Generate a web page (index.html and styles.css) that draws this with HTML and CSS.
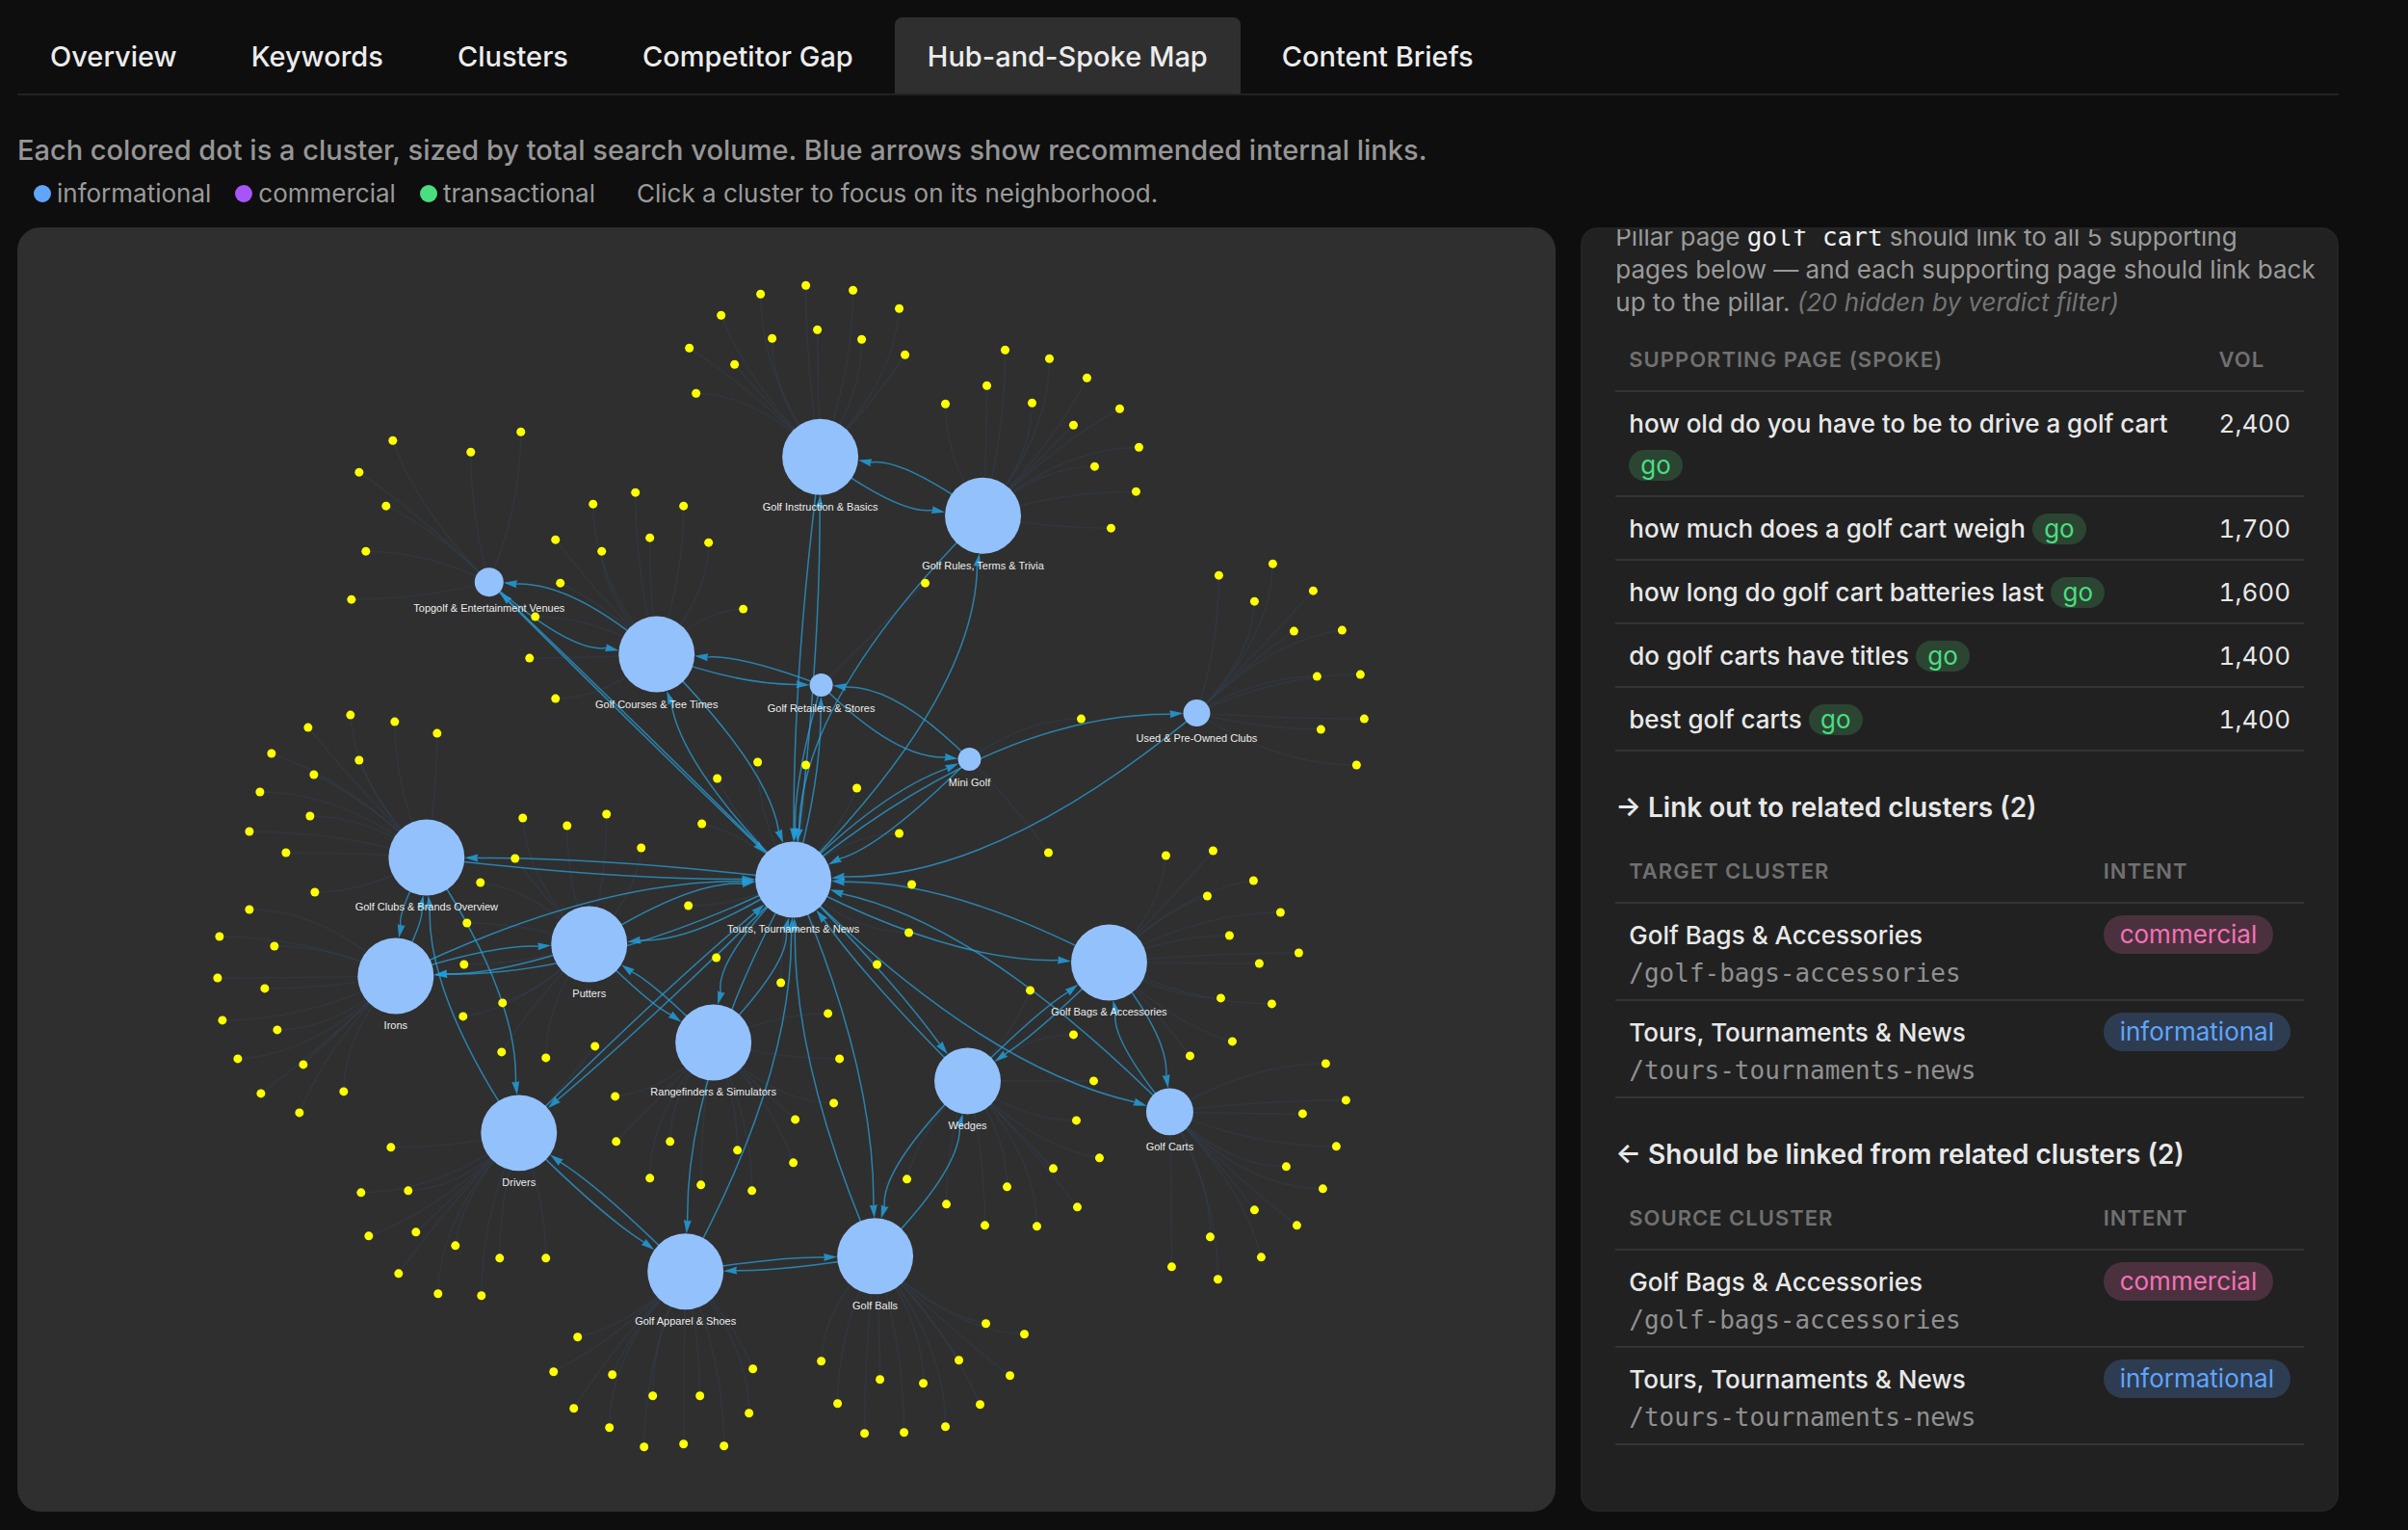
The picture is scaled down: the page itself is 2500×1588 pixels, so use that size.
FILE: index.html
```html
<!DOCTYPE html>
<html lang="en">
<head>
    <meta charset="UTF-8">
    <meta name="viewport" content="width=device-width, initial-scale=1.0">
    <title>Hub-and-Spoke Map</title>
    <link rel="stylesheet" href="styles.css">
</head>
<body>
    <nav class="tabs">
        <button class="tab">Overview</button>
        <button class="tab">Keywords</button>
        <button class="tab">Clusters</button>
        <button class="tab">Competitor Gap</button>
        <button class="tab active">Hub-and-Spoke Map</button>
        <button class="tab">Content Briefs</button>
    </nav>

    <p class="intro">Each colored dot is a cluster, sized by total search volume. Blue arrows show recommended internal links.</p>
    <div class="legend">
        <span class="legend-item"><i class="dot dot-info"></i>informational</span>
        <span class="legend-item"><i class="dot dot-comm"></i>commercial</span>
        <span class="legend-item"><i class="dot dot-trans"></i>transactional</span>
        <span class="legend-hint">Click a cluster to focus on its neighborhood.</span>
    </div>

    <main class="layout">
        <section class="map">
            <svg id="graph" viewBox="17 236 1598 1333" role="img" aria-label="Cluster map"></svg>
        </section>

        <aside class="details">
            <p class="pillar">Pillar page <code>golf cart</code> should link to all 5 supporting pages below — and each supporting page should link back up to the pillar. <em>(20 hidden by verdict filter)</em></p>
            <table class="pages">
                <thead>
                    <tr><th>Supporting page (spoke)</th><th class="vol">Vol</th></tr>
                </thead>
                <tbody>
                    <tr><td><b>how old do you have to be to drive a golf cart</b> <span class="go">go</span></td><td class="vol">2,400</td></tr>
                    <tr><td><b>how much does a golf cart weigh</b> <span class="go">go</span></td><td class="vol">1,700</td></tr>
                    <tr><td><b>how long do golf cart batteries last</b> <span class="go">go</span></td><td class="vol">1,600</td></tr>
                    <tr><td><b>do golf carts have titles</b> <span class="go">go</span></td><td class="vol">1,400</td></tr>
                    <tr><td><b>best golf carts</b> <span class="go">go</span></td><td class="vol">1,400</td></tr>
                </tbody>
            </table>

            <h3>→ Link out to related clusters (2)</h3>
            <table class="links">
                <thead>
                    <tr><th>Target cluster</th><th class="intent">Intent</th></tr>
                </thead>
                <tbody>
                    <tr><td><b>Golf Bags &amp; Accessories</b><code>/golf-bags-accessories</code></td><td class="intent"><span class="pill commercial">commercial</span></td></tr>
                    <tr><td><b>Tours, Tournaments &amp; News</b><code>/tours-tournaments-news</code></td><td class="intent"><span class="pill informational">informational</span></td></tr>
                </tbody>
            </table>

            <h3>← Should be linked from related clusters (2)</h3>
            <table class="links">
                <thead>
                    <tr><th>Source cluster</th><th class="intent">Intent</th></tr>
                </thead>
                <tbody>
                    <tr><td><b>Golf Bags &amp; Accessories</b><code>/golf-bags-accessories</code></td><td class="intent"><span class="pill commercial">commercial</span></td></tr>
                    <tr><td><b>Tours, Tournaments &amp; News</b><code>/tours-tournaments-news</code></td><td class="intent"><span class="pill informational">informational</span></td></tr>
                </tbody>
            </table>
        </aside>
    </main>
    <script src="script.js"></script>
</body>
</html>
```
FILE: styles.css
```css
* {
    box-sizing: border-box;
}

body {
    margin: 0;
    padding: 18px 72px 0 18px;
    background: #0e0e0e;
    color: #e8e8e8;
    font-family: Inter, sans-serif;
    font-size: 26px;
}

.tabs {
    display: flex;
    gap: 9px;
    border-bottom: 2px solid #222;
}

.tab {
    padding: 2px 34px 0;
    border: none;
    border-radius: 8px 8px 0 0;
    background: none;
    color: #ececec;
    font-family: inherit;
    font-size: 29px;
    font-weight: 500;
    line-height: 77px;
    cursor: pointer;
}

.tab.active {
    background: #2f2f2f;
}

.intro {
    margin: 36px 0 0;
    color: #969696;
    font-size: 29px;
    font-weight: 500;
    line-height: 42px;
}

.legend {
    display: flex;
    align-items: center;
    gap: 25px;
    padding-left: 17px;
    color: #9a9a9a;
    line-height: 48px;
}

.legend-item {
    display: flex;
    align-items: center;
    gap: 6px;
}

.legend-hint {
    margin-left: 18px;
}

.dot {
    width: 18px;
    height: 18px;
    border-radius: 50%;
}

.dot-info {
    background: #60a5fa;
}

.dot-comm {
    background: #a855f7;
}

.dot-trans {
    background: #4ade80;
}

.layout {
    display: grid;
    grid-template-columns: 67fr 33fr;
    gap: 26px;
    height: calc(100vh - 255px);
    margin-top: 11px;
}

.map,
.details {
    min-width: 0;
    border-radius: 24px;
    overflow: hidden;
}

.map {
    background: #2f2f2f;
}

.map svg {
    display: block;
    width: 100%;
    height: 100%;
}

.details {
    padding: 0 34px;
    border: 2px solid #242424;
    border-radius: 18px;
    background: #212121;
}

.pillar {
    margin: -9px -12px 10px 0;
    color: #9a9a9a;
    line-height: 34px;
}

.pillar code {
    color: #f0f0f0;
}

.pillar em {
    color: #747474;
}

code {
    font-family: "DejaVu Sans Mono", monospace;
    font-size: 26px;
    line-height: 1;
}

table {
    width: 100%;
    border-collapse: collapse;
}

th,
td {
    padding: 11px 14px;
    border-bottom: 2px solid #343434;
    text-align: left;
    vertical-align: top;
    line-height: 43px;
}

th {
    padding-bottom: 10px;
    color: #707070;
    font-size: 22px;
    font-weight: 600;
    letter-spacing: 1px;
    text-transform: uppercase;
}

td b {
    font-weight: 500;
}

.pages td {
    padding-bottom: 10px;
}

.vol {
    width: 98px;
    font-variant-numeric: tabular-nums;
}

.go {
    display: inline-block;
    padding: 0 12px;
    border-radius: 16px;
    background: #2b4532;
    color: #4ade80;
    line-height: 32px;
}

h3 {
    margin: 36px 0 12px;
    font-size: 28px;
    font-weight: 600;
    line-height: 44px;
}

.links td {
    padding: 13px 14px 8px;
    line-height: 39px;
}

.links td b,
.links td code {
    display: block;
}

.links td b {
    line-height: 40px;
}

.links td code {
    color: #909090;
    line-height: 38px;
}

.links .intent {
    width: 222px;
}

.links td.intent {
    padding-top: 12px;
}

.pill {
    display: inline-block;
    padding: 0 17px;
    border-radius: 20px;
    line-height: 40px;
}

.commercial {
    background: #4b313e;
    color: #f472b6;
}

.informational {
    background: #2e3c52;
    color: #60a5fa;
}

.hub {
    fill: #93c1fc;
}

.hub-label {
    fill: #eeeeee;
    font-family: "Liberation Sans", Arial, sans-serif;
    font-size: 11px;
    text-anchor: middle;
    dominant-baseline: central;
}

.spoke {
    fill: #ffff00;
}

.spoke-line {
    fill: none;
    stroke: #334155;
    stroke-opacity: .45;
    stroke-width: 1.5;
}

.link-line {
    fill: none;
    stroke: #2a9fd8;
    stroke-opacity: .75;
    stroke-width: 1.5;
}

.link-arrow {
    fill: #229fdc;
    fill-opacity: .85;
}
```
FILE: script.js
```js
const hubs = {
    topgolf: { label: 'Topgolf & Entertainment Venues', x: 507, y: 604, r: 15, spokes: [[407,457],[488,469],[540,448],[372,490],[400,525],[379,572],[364,622]] },
    courses: { label: 'Golf Courses & Tee Times', x: 681, y: 679, r: 39.5, spokes: [[576,560],[615,523],[659,511],[709,525],[624,572],[674,558],[735,563],[581,605],[555,640],[549,683],[576,725],[771,632]] },
    instruction: { label: 'Golf Instruction & Basics', x: 851, y: 474, r: 39.5, spokes: [[789,305],[836,296],[885,301],[933,320],[748,327],[801,351],[848,342],[894,352],[939,368],[715,361],[762,378],[722,408]] },
    rules: { label: 'Golf Rules, Terms & Trivia', x: 1020, y: 535, r: 39.5, spokes: [[1043,363],[1089,372],[1128,392],[981,419],[1024,400],[1071,418],[1162,424],[1114,441],[1182,464],[1136,484],[1179,510],[1153,548]] },
    retailers: { label: 'Golf Retailers & Stores', x: 852, y: 711, r: 12, spokes: [[960,605]] },
    mini: { label: 'Mini Golf', x: 1006, y: 788, r: 12, spokes: [[1122,746],[1088,885]] },
    used: { label: 'Used & Pre-Owned Clubs', x: 1242, y: 740, r: 14, spokes: [[1265,597],[1321,585],[1302,624],[1363,613],[1343,655],[1393,654],[1367,702],[1412,700],[1416,746],[1371,757],[1408,794]] },
    tours: { label: 'Tours, Tournaments & News', x: 823, y: 913, r: 39.5, spokes: [[744,808],[786,791],[836,794],[889,818],[728,855],[933,865],[946,918],[714,940],[943,968],[743,994],[910,1001],[810,1020]] },
    clubs: { label: 'Golf Clubs & Brands Overview', x: 442, y: 890, r: 39.5, spokes: [[319,755],[363,742],[409,749],[453,761],[281,782],[325,804],[372,789],[269,822],[321,847],[258,863],[296,885],[326,926]] },
    irons: { label: 'Irons', x: 410, y: 1013, r: 39.5, spokes: [[258,944],[227,972],[284,982],[225,1015],[274,1026],[230,1059],[287,1069],[246,1099],[314,1105],[270,1135],[310,1155],[356,1133]] },
    putters: { label: 'Putters', x: 611, y: 980, r: 39.5, spokes: [[542,849],[588,857],[629,845],[665,880],[534,891],[498,916],[484,958],[481,1001],[480,1055],[521,1041],[520,1092],[566,1098]] },
    range: { label: 'Rangefinders & Simulators', x: 740, y: 1082, r: 39.5, spokes: [[638,1138],[639,1185],[695,1185],[674,1223],[727,1230],[765,1194],[780,1236],[823,1207],[825,1162],[865,1145],[871,1099],[859,1052]] },
    drivers: { label: 'Drivers', x: 538, y: 1176, r: 39.5, spokes: [[405,1191],[374,1238],[423,1236],[382,1283],[431,1279],[413,1322],[472,1293],[454,1343],[499,1345],[518,1306],[566,1306],[617,1086]] },
    apparel: { label: 'Golf Apparel & Shoes', x: 711, y: 1320, r: 39.5, spokes: [[599,1388],[574,1424],[635,1427],[595,1462],[632,1482],[677,1449],[726,1449],[668,1502],[709,1499],[751,1501],[777,1467],[781,1421]] },
    balls: { label: 'Golf Balls', x: 908, y: 1304, r: 39.5, spokes: [[1023,1374],[1063,1385],[995,1412],[1048,1428],[1017,1458],[958,1436],[981,1481],[913,1432],[938,1487],[897,1488],[869,1457],[852,1413]] },
    wedges: { label: 'Wedges', x: 1004, y: 1122, r: 34.5, spokes: [[1069,1028],[1114,1074],[1135,1122],[1117,1163],[1141,1202],[1093,1213],[1118,1253],[1045,1232],[1076,1273],[1022,1272],[982,1250],[941,1224]] },
    bags: { label: 'Golf Bags & Accessories', x: 1151, y: 999, r: 39.5, spokes: [[1210,888],[1259,883],[1301,914],[1253,930],[1329,947],[1276,971],[1348,989],[1307,1000],[1267,1036],[1320,1042],[1279,1081],[1235,1096]] },
    carts: { label: 'Golf Carts', x: 1214, y: 1154, r: 24.5, spokes: [[1376,1104],[1397,1142],[1352,1156],[1387,1190],[1335,1211],[1373,1234],[1302,1256],[1346,1272],[1309,1305],[1256,1284],[1216,1315],[1264,1328]] }
};

// every pair links both ways
const pairs = [
    ['topgolf', 'courses'], ['topgolf', 'tours'], ['courses', 'retailers'], ['courses', 'tours'],
    ['instruction', 'rules'], ['instruction', 'tours'], ['rules', 'tours'], ['retailers', 'tours'],
    ['retailers', 'mini'], ['mini', 'tours'], ['used', 'tours'], ['clubs', 'tours'],
    ['clubs', 'irons'], ['clubs', 'drivers'], ['irons', 'putters'], ['irons', 'tours'],
    ['putters', 'tours'], ['putters', 'range'], ['range', 'tours'], ['drivers', 'tours'],
    ['drivers', 'apparel'], ['apparel', 'tours'], ['apparel', 'balls'], ['balls', 'tours'],
    ['balls', 'wedges'], ['wedges', 'tours'], ['wedges', 'bags'], ['bags', 'tours'],
    ['bags', 'carts'], ['carts', 'tours']
];

const svg = document.getElementById('graph');
const ARROW = 14;

function add(tag, attrs, text) {
    const el = document.createElementNS('http://www.w3.org/2000/svg', tag);
    for (const key in attrs) el.setAttribute(key, attrs[key]);
    if (text) el.textContent = text;
    svg.appendChild(el);
}

// control point: half the longer side, clamped on the shorter one
function control(a, b) {
    const dx = Math.abs(a.x - b.x);
    const dy = Math.abs(a.y - b.y);
    const step = Math.max(dx, dy) / 2;
    return {
        x: a.x + Math.sign(b.x - a.x) * Math.min(step, dx),
        y: a.y + Math.sign(b.y - a.y) * Math.min(step, dy)
    };
}

function pointAt(a, c, b, t) {
    const u = 1 - t;
    return {
        x: u * u * a.x + 2 * u * t * c.x + t * t * b.x,
        y: u * u * a.y + 2 * u * t * c.y + t * t * b.y
    };
}

function drawLink(a, b) {
    const c = control(a, b);
    let low = 0;
    let high = 1;
    // find where the curve meets the edge of the target circle
    for (let i = 0; i < 20; i++) {
        const mid = (low + high) / 2;
        const p = pointAt(a, c, b, mid);
        if (Math.hypot(p.x - b.x, p.y - b.y) > b.r) low = mid;
        else high = mid;
    }
    const tip = pointAt(a, c, b, low);
    const guide = pointAt(a, c, b, Math.max(0, low - 0.1));
    const angle = Math.atan2(tip.y - guide.y, tip.x - guide.x);
    const endX = tip.x - ARROW * 0.9 * Math.cos(angle);
    const endY = tip.y - ARROW * 0.9 * Math.sin(angle);

    add('path', { class: 'link-line', d: `M${a.x} ${a.y}Q${c.x} ${c.y} ${endX} ${endY}` });
    add('path', {
        class: 'link-arrow',
        d: 'M0 0L-14 4L-13 0L-14 -4Z',
        transform: `translate(${tip.x} ${tip.y}) rotate(${angle * 180 / Math.PI})`
    });
}

const all = Object.values(hubs);

all.forEach(hub => {
    hub.spokes.forEach(([x, y]) => {
        const c = control(hub, { x, y });
        add('path', { class: 'spoke-line', d: `M${hub.x} ${hub.y}Q${c.x} ${c.y} ${x} ${y}` });
    });
});

pairs.forEach(([a, b]) => {
    drawLink(hubs[a], hubs[b]);
    drawLink(hubs[b], hubs[a]);
});

all.forEach(hub => {
    add('circle', { class: 'hub', cx: hub.x, cy: hub.y, r: hub.r });
    add('text', { class: 'hub-label', x: hub.x, y: hub.y + hub.r + 12 }, hub.label);
});

all.forEach(hub => {
    hub.spokes.forEach(([x, y]) => add('circle', { class: 'spoke', cx: x, cy: y, r: 4.5 }));
});
```
